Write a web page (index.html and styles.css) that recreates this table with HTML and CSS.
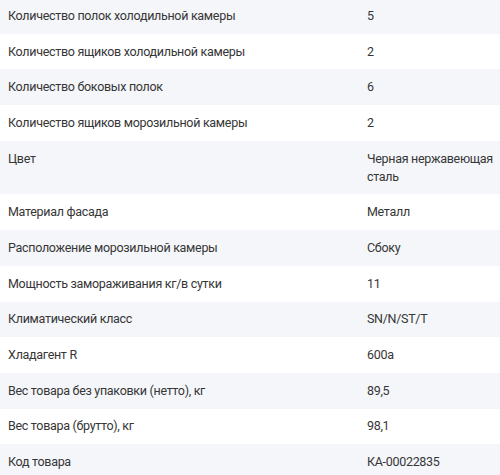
FILE: index.html
```html
<!DOCTYPE html>
<html lang="ru">
<head>
<meta charset="utf-8">
<link rel="stylesheet" href="styles.css">
</head>
<body>
<div class="specs">
  <div class="row"><div class="label">Количество полок холодильной камеры</div><div class="value">5</div></div>
  <div class="row"><div class="label">Количество ящиков холодильной камеры</div><div class="value">2</div></div>
  <div class="row"><div class="label">Количество боковых полок</div><div class="value">6</div></div>
  <div class="row"><div class="label">Количество ящиков морозильной камеры</div><div class="value">2</div></div>
  <div class="row"><div class="label">Цвет</div><div class="value">Черная нержавеющая сталь</div></div>
  <div class="row"><div class="label">Материал фасада</div><div class="value">Металл</div></div>
  <div class="row"><div class="label">Расположение морозильной камеры</div><div class="value">Сбоку</div></div>
  <div class="row"><div class="label">Мощность замораживания кг/в сутки</div><div class="value">11</div></div>
  <div class="row"><div class="label">Климатический класс</div><div class="value">SN/N/ST/T</div></div>
  <div class="row"><div class="label">Хладагент R</div><div class="value">600a</div></div>
  <div class="row"><div class="label">Вес товара без упаковки (нетто), кг</div><div class="value">89,5</div></div>
  <div class="row"><div class="label">Вес товара (брутто), кг</div><div class="value">98,1</div></div>
  <div class="row"><div class="label">Код товара</div><div class="value">КА-00022835</div></div>
</div>
</body>
</html>
```
FILE: styles.css
```css
html, body {
  margin: 0;
  padding: 0;
  background: #ffffff;
}
body {
  font-family: Roboto, "Noto Sans", sans-serif;
  font-size: 12.5px;
  letter-spacing: -0.3px;
  color: #363636;
  overflow: hidden;
}
.specs {
  margin-top: -2px;
}
.row {
  display: grid;
  grid-template-columns: 359px 133px;
  padding: 8.85px 0 8.85px 8px;
  line-height: 18px;
  align-items: start;
}
.row:nth-child(odd) {
  background: #f5f6fa;
}
```
